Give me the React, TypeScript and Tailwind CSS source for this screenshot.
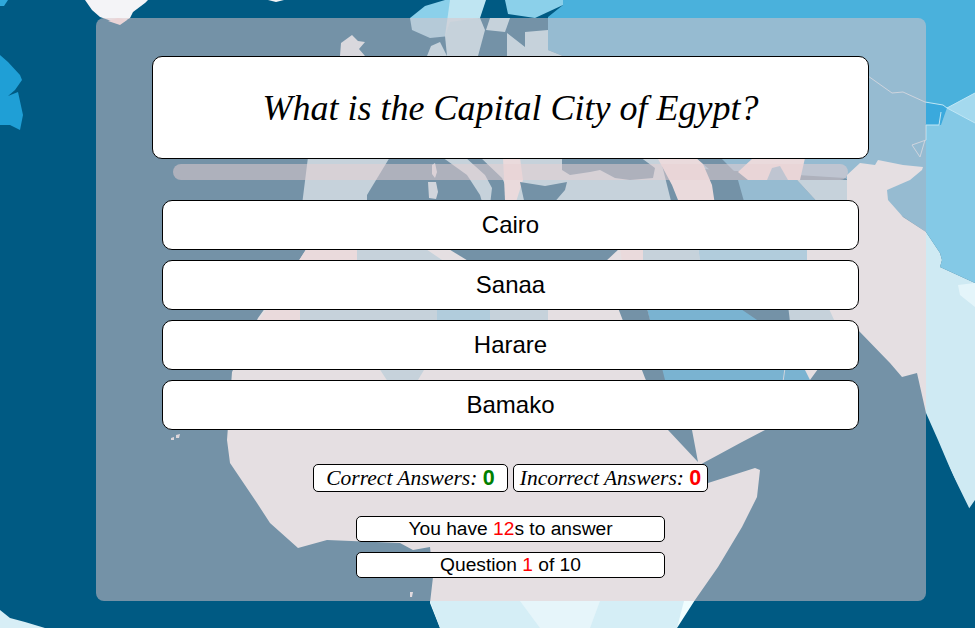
import React from "react";

const SEA = "#005a83";
const WHITE = "#f0fdfe";
const PINK = "#fbf3f3";
const PALE = "#aee2f1";
const MID = "#4ab1dc";
const DEEP = "#0da0db";

// map shapes in page coordinates, painted in this order
const LAND: [string, string][] = [
  // russia and the north east
  [MID, "563,0 975,0 975,232 926,232 845,178 640,165 563,56 548,50 548,17 563,5"],
  ["#3aa9dd", "926,102 943,105 947,108 941,125 926,125"],
  ["#84c9e6", "947,108 975,93 975,283 940,267 942,260 940,253 926,232 926,125 941,125"],
  ["#a4d9ee", "947,108 975,93 975,123"],
  // scandinavia
  ["#8bd0ea", "410,18 425,6 445,0 450,0 450,36 430,38 412,30"],
  ["#bfe5f2", "450,0 486,0 480,18 445,36"],
  [PALE, "450,22 480,18 485,30 478,56 447,56 445,36"],
  ["#8bd0ea", "505,0 563,0 563,5 535,18 508,14"],
  [PALE, "507,33 525,47 525,32 548,30 548,50 563,56 507,56"],
  [PALE, "490,18 510,18 505,32 486,30"],
  [PALE, "427,56 431,46 440,42 447,56"],
  // uk
  ["#d6eef5", "341,43 352,35 358,41 365,42 359,49 365,56 340,56"],
  // europe strip under the question
  [PALE, "308,157 660,157 672,205 302,205"],
  [SEA, "390,157 442,157 467,175 480,195 483,205 367,205 367,195 370,190"],
  ["#c5e8f3", "432,165 435,163 437,172 435,178 432,174"],
  ["#c5e8f3", "428,182 436,182 438,192 436,199 429,198"],
  [SEA, "465,157 480,157 502,178 510,195 513,205 490,205 492,188 485,175"],
  [PINK, "503,158 520,158 523,180 515,205 505,200"],
  [SEA, "520,182 545,186 567,182 565,190 552,205 525,205"],
  [SEA, "562,157 640,157 655,168 653,178 630,180 615,178 600,170 590,172 570,175 562,170"],
  [PINK, "657,157 700,157 712,185 715,205 680,205 672,185"],
  [SEA, "695,157 720,157 735,172 747,178 745,190 747,205 715,205 718,185 720,178 710,170"],
  // iran and neighbours
  [PINK, "753,158 805,158 800,180 748,180 738,172"],
  [MID, "767,180 772,168 780,166 788,180"],
  [MID, "738,180 797,180 820,205 745,205"],
  [PALE, "797,180 847,180 847,205 820,205"],
  [WHITE, "847,205 847,175 860,163 875,165 878,160 903,165 923,167 922,170 910,180 887,190 888,200 903,217 926,232 926,330 858,330 835,300 807,250 800,205"],
  // africa and arabia
  [WHITE, "307,248 926,248 926,628 440,628 430,603 433,577 430,547 413,550 400,543 327,540 298,548 270,523 257,503 230,463 227,440 232,372 258,318 298,262"],
  [PINK, "307,248 357,248 357,262 300,310 300,322 258,322 298,262"],
  [PALE, "357,245 420,245 445,262 437,322 300,322 300,300 357,262"],
  ["#82d4f2", "437,305 490,305 490,322 437,322"],
  [PALE, "490,300 548,300 548,322 490,322"],
  [PALE, "377,365 427,365 415,385 390,385"],
  [SEA, "447,248 620,248 605,262 470,262"],
  [PINK, "620,248 643,248 643,262 622,262"],
  [PALE, "643,245 698,245 700,262 643,262"],
  ["#82d4f2", "698,245 807,245 807,262 700,262"],
  [PALE, "788,300 825,300 835,322 788,322"],
  [DEEP, "645,300 735,300 790,340 810,380 665,385"],
  [SEA, "735,305 788,305 790,322 760,322"],
  [SEA, "615,300 645,300 665,380 692,430 698,462 668,430 645,378"],
  // south, below the panel
  ["#d5eef6", "430,601 684,601 677,628 440,628"],
  ["#e6f5fa", "520,601 600,601 590,628 540,628"],
  // india
  ["#cfeaf3", "926,232 940,253 942,260 940,267 975,283 975,520 926,420"],
  ["#e4f5fa", "958,285 975,283 975,307 960,295"],
  // arabian sea
  [SEA, "850,325 858,330 890,363 902,377 917,373 926,413 938,440 955,480 968,510 975,500 975,628 677,628 695,600 718,567 742,527 757,497 760,470 755,468 708,483 700,465 705,462 718,455 742,442 765,430 810,380"],
  // north atlantic
  ["#f4f4f7", "85,0 148,0 145,3 133,12 130,18 120,24 100,17 92,10"],
  ["#fbe6e6", "108,21 118,18 127,20 120,25"],
  ["#f4f4f7", "268,0 284,0 276,2"],
  ["#1f9fd6", "0,55 8,62 20,75 22,80 15,90 8,96 18,92 23,115 20,130 10,125 0,125"],
  ["#2fa8da", "0,0 8,0 4,6 0,6"],
  ["#d7eef6", "0,610 10,618 25,622 45,628 0,628"],
  ["#dfe9ef", "171,438 174,437 174,440 171,440"],
  ["#dfe9ef", "176,435 180,434 179,438 176,438"],
  ["#e8f2f6", "410,592 413,592 412,597 410,597"],
];

const BORDERS = [
  "868,76 892,93 903,92 925,102 943,105 947,108 975,93",
  "947,108 975,123",
  "941,112 939,125 926,125 926,140 912,145 920,157 925,140",
  "785,368 783,382",
];

const WorldMap = () => (
  <svg
    className="absolute inset-0 h-full w-full"
    viewBox="0 0 975 628"
    preserveAspectRatio="none"
    aria-hidden="true"
  >
    <rect width="975" height="628" fill={SEA} />
    {LAND.map(([fill, points], i) => (
      <polygon key={i} fill={fill} points={points} />
    ))}
    {BORDERS.map((points, i) => (
      <polyline key={i} fill="none" stroke="#bfe6f5" strokeWidth="1" points={points} />
    ))}
  </svg>
);

const answers = ["Cairo", "Sanaa", "Harare", "Bamako"];

const serif = "font-['Liberation_Serif',serif] italic";
const sans = "font-['Liberation_Sans',Arial,sans-serif]";

const App = () => {
  return (
    <div className="relative h-[628px] w-[975px] overflow-hidden">
      <WorldMap />
      <div className="relative ml-[96px] flex h-[583px] w-[830px] translate-y-[18px] flex-col items-center rounded-lg bg-[#dbc4c9]/[0.53] pr-[1px] pt-[38px]">
        <div className={`flex h-[103px] w-[717px] items-center justify-center rounded-[10px] border border-black bg-white text-[36px] text-black ${serif}`}>
          What is the Capital City of Egypt?
        </div>
        <div className="mt-[5px] h-4 w-[675px] rounded-lg bg-[#e8d0d2]/50" />
        <div className="mt-5 flex flex-col gap-[10px]">
          {answers.map((answer) => (
            <button
              key={answer}
              className={`h-[50px] w-[697px] rounded-[10px] border border-black bg-white text-2xl text-black ${sans}`}
            >
              {answer}
            </button>
          ))}
        </div>
        <div className="mt-[34px] flex gap-[5px]">
          <div className={`flex h-7 w-[195px] items-center justify-center rounded-[5px] border border-black bg-white text-[21.5px] text-black ${serif}`}>
            Correct Answers:&nbsp;
            <b className={`not-italic text-[#008000] ${sans}`}>0</b>
          </div>
          <div className={`flex h-7 w-[195px] items-center justify-center rounded-[5px] border border-black bg-white text-[21.5px] text-black ${serif}`}>
            Incorrect Answers:&nbsp;
            <b className={`not-italic text-[#ff0000] ${sans}`}>0</b>
          </div>
        </div>
        <div className={`mt-6 flex h-[26px] w-[309px] items-center justify-center whitespace-pre rounded-[5px] border border-black bg-white text-[19.2px] text-black ${sans}`}>
          You have <span className="text-[#ff0000]">12</span>s to answer
        </div>
        <div className={`mt-[10px] flex h-[26px] w-[309px] items-center justify-center whitespace-pre rounded-[5px] border border-black bg-white text-[19.2px] text-black ${sans}`}>
          Question <span className="text-[#ff0000]">1</span> of 10
        </div>
      </div>
    </div>
  );
};

export default App;
